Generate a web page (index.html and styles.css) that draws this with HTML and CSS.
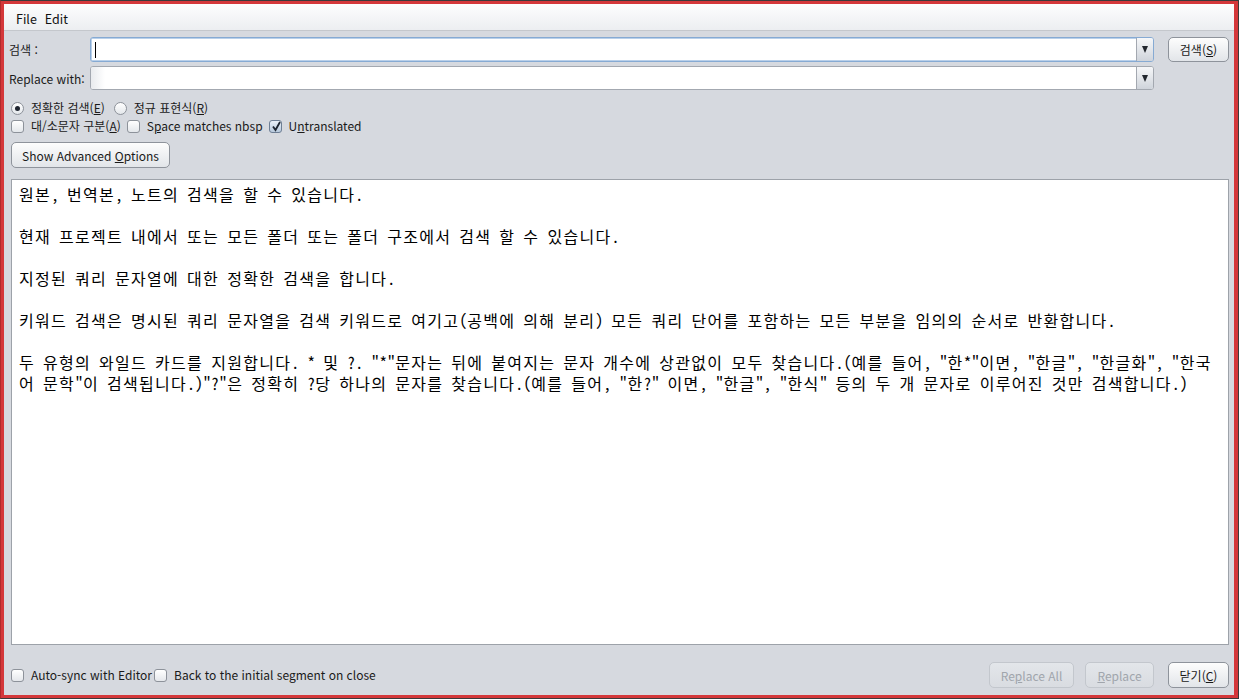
FILE: index.html
```html
<!DOCTYPE html>
<html lang="ko">
<head>
<meta charset="utf-8">
<title>검색</title>
<link rel="stylesheet" href="styles.css">
</head>
<body>
<div class="window">
  <div class="frame">
    <div class="app">
      <div class="menubar">
        <span class="menu">File</span>
        <span class="menu">Edit</span>
      </div>

      <div class="fields">
        <label class="flabel">검색 :</label>
        <div class="combo focused">
          <div class="entry"><span class="caret"></span></div>
          <div class="arrow"><span class="tri"></span></div>
        </div>
        <button class="btn">검색(<u>S</u>)</button>

        <label class="flabel">Replace with:</label>
        <div class="combo">
          <div class="entry"></div>
          <div class="arrow"><span class="tri"></span></div>
        </div>
        <span></span>
      </div>

      <div class="optrow radios">
        <span class="opt"><span class="radio on"></span><span class="otext">정확한 검색(<u>E</u>)</span></span>
        <span class="opt"><span class="radio"></span><span class="otext">정규 표현식(<u>R</u>)</span></span>
      </div>
      <div class="optrow checks">
        <span class="opt"><span class="check"></span><span class="otext">대/소문자 구분(<u>A</u>)</span></span>
        <span class="opt"><span class="check"></span><span class="otext">S<u>p</u>ace matches nbsp</span></span>
        <span class="opt"><span class="check on"><svg viewBox="0 0 13 13" width="13" height="13"><path d="M3 6.5 L5.5 10 L10 2" fill="none" stroke="#1c2430" stroke-width="1.8"/></svg></span><span class="otext">U<u>n</u>translated</span></span>
      </div>

      <div class="advrow">
        <button class="btn adv">Show Advanced <u>O</u>ptions</button>
      </div>

      <div class="results">
<pre class="rtext">원본, 번역본, 노트의 검색을 할 수 있습니다.

현재 프로젝트 내에서 또는 모든 폴더 또는 폴더 구조에서 검색 할 수 있습니다.

지정된 쿼리 문자열에 대한 정확한 검색을 합니다.

키워드 검색은 명시된 쿼리 문자열을 검색 키워드로 여기고(공백에 의해 분리) 모든 쿼리 단어를 포함하는 모든 부분을 임의의 순서로 반환합니다.

두 유형의 와일드 카드를 지원합니다. * 및 ?. "*"문자는 뒤에 붙여지는 문자 개수에 상관없이 모두 찾습니다.(예를 들어, "한*"이면, "한글", "한글화", "한국
어 문학"이 검색됩니다.)"?"은 정확히 ?당 하나의 문자를 찾습니다.(예를 들어, "한?" 이면, "한글", "한식" 등의 두 개 문자로 이루어진 것만 검색합니다.)</pre>
      </div>

      <div class="bottom">
        <div class="bleft">
          <span class="opt"><span class="check"></span><span class="otext">Auto-sync with Editor</span></span>
          <span class="opt"><span class="check"></span><span class="otext">Back to the initial segment on close</span></span>
        </div>
        <div class="bright">
          <button class="btn disabled w-all">Re<u>p</u>lace All</button>
          <button class="btn disabled w-rep"><u>R</u>eplace</button>
          <button class="btn w-close">닫기(<u>C</u>)</button>
        </div>
      </div>
    </div>
  </div>
</div>
<script src="script.js"></script>
</body>
</html>
```

FILE: styles.css
```css
html, body {
  margin: 0;
  padding: 0;
  background: #2f2f2f;
}

.window {
  width: 1239px;
  height: 699px;
  box-sizing: border-box;
  border: 1px solid #3a3a3a;
  border-left-color: #b02a2a;
}

.frame {
  height: 100%;
  box-sizing: border-box;
  border: 3px solid #d4373a;
  border-right-width: 4px;
}

.app {
  height: 100%;
  box-sizing: border-box;
  background: #d6d9df;
  display: flex;
  flex-direction: column;
  padding: 0 5px 7px 7px;
  font-family: "Noto Sans CJK KR", "Noto Sans", sans-serif;
  font-size: 12px;
  color: #1a1a1a;
}

u {
  text-decoration: underline;
  text-underline-offset: 1px;
}

/* menu bar */
.menubar {
  height: 27px;
  margin: 0 -5px 0 -7px;
  padding-left: 12px;
  padding-top: 3px;
  box-sizing: border-box;
  display: flex;
  align-items: center;
  gap: 8px;
  background: linear-gradient(#fdfdfe, #eceef1);
  border-bottom: 1px solid #c4c7cc;
  font-size: 12.5px;
  color: #111;
}

/* search fields */
.fields {
  margin-top: 6px;
  display: grid;
  grid-template-columns: 79px 1fr 75px;
  grid-template-rows: 25px 24px;
  row-gap: 4px;
}

.fields .btn {
  width: 61px;
  justify-self: end;
}

.flabel {
  margin-left: -2px;
  display: flex;
  align-items: center;
  white-space: nowrap;
  color: #1a1a1a;
}

.combo {
  display: flex;
  box-sizing: border-box;
  border: 1px solid #a3a8b0;
  border-radius: 3px;
  background: #fff;
  overflow: hidden;
}

.combo.focused {
  border-color: #86aad3;
  box-shadow: inset 0 0 0 1px #b9d0ea;
}

.entry {
  flex: 1;
  position: relative;
  background: linear-gradient(90deg, #e9ebee 0, #fff 14px);
}

.combo.focused .entry {
  background: #fff;
  margin: 1px 0 1px 1px;
}

.caret {
  position: absolute;
  left: 3px;
  top: 3px;
  width: 1px;
  height: 16px;
  background: #000;
}

.arrow {
  width: 16px;
  border-left: 1px solid #a3a8b0;
  background: linear-gradient(#f6f7f9, #cfd4db);
  display: flex;
  align-items: center;
  justify-content: center;
}

.tri {
  width: 0;
  height: 0;
  border-left: 3.5px solid transparent;
  border-right: 3.5px solid transparent;
  border-top: 7px solid #22272e;
}

/* buttons */
.btn {
  box-sizing: border-box;
  height: 25px;
  padding: 0 10px;
  border: 1px solid #8e939b;
  border-radius: 5px;
  background: linear-gradient(#fdfdfd, #e2e5e9);
  font-family: "Noto Sans CJK KR", "Noto Sans", sans-serif;
  font-size: 12px;
  color: #1a1a1a;
  white-space: nowrap;
}

.btn.disabled {
  border-color: #c3c7cd;
  background: linear-gradient(#e3e6ea, #d9dce1);
  color: #a0a5ac;
}

/* options */
.optrow {
  display: flex;
  align-items: center;
  height: 18px;
}

.radios {
  margin-top: 9px;
  gap: 9px;
}

.checks {
  margin-top: 0;
  gap: 6px;
}

.opt {
  display: inline-flex;
  align-items: center;
  gap: 7px;
  white-space: nowrap;
}

.otext {
  line-height: 18px;
}

.radio {
  width: 13px;
  height: 13px;
  box-sizing: border-box;
  border-radius: 50%;
  border: 1px solid #8d929a;
  background: linear-gradient(#ffffff, #e4e7eb);
  display: inline-flex;
  align-items: center;
  justify-content: center;
}

.radio.on::after {
  content: "";
  width: 5px;
  height: 5px;
  border-radius: 50%;
  background: #1f2530;
}

.check {
  width: 13px;
  height: 13px;
  box-sizing: border-box;
  border-radius: 3px;
  border: 1px solid #8d929a;
  background: linear-gradient(#ffffff, #e4e7eb);
  display: inline-flex;
  position: relative;
}

.check.on {
  background: linear-gradient(#e9f0f8, #b8c9dd);
  border-color: #6d7e94;
}

.check svg {
  position: absolute;
  left: 0;
  top: -1px;
}

.advrow {
  margin-top: 7px;
  display: flex;
}

.btn.adv {
  height: 26px;
  width: 159px;
  padding: 0;
}

/* results */
.results {
  margin-top: 11px;
  flex: 1;
  min-height: 0;
  box-sizing: border-box;
  background: #fff;
  border: 1px solid #9da2a9;
  padding: 4px 4px 0 7px;
  overflow: hidden;
}

.rtext {
  margin: 0;
  font-family: "Noto Sans Mono CJK KR", "Noto Sans Mono CJK SC", "Noto Sans CJK KR", monospace;
  font-size: 16px;
  line-height: 21px;
  color: #000;
  white-space: pre;
}

.ko {
  letter-spacing: 1.28px;
}

/* bottom row */
.bottom {
  margin-top: 17px;
  height: 26px;
  display: flex;
  align-items: center;
  justify-content: space-between;
}

.bleft {
  display: flex;
  align-items: center;
  gap: 2px;
}

.bright {
  display: flex;
  gap: 11px;
  align-items: center;
}

.bright .btn {
  height: 26px;
  padding: 0;
}

.w-all { width: 85px; }
.w-rep { width: 69px; margin-right: 3px; }
.w-close { width: 61px; }
```

FILE: script.js
```js
(function () {
  var blocks = document.querySelectorAll('.rtext');
  blocks.forEach(function (el) {
    var text = el.textContent;
    var esc = text.replace(/&/g, '&amp;').replace(/</g, '&lt;').replace(/>/g, '&gt;');
    el.innerHTML = esc.replace(/([\u1100-\u11FF\u3130-\u318F\uAC00-\uD7A3]+)/g, '<span class="ko">$1</span>');
  });
})();
```
